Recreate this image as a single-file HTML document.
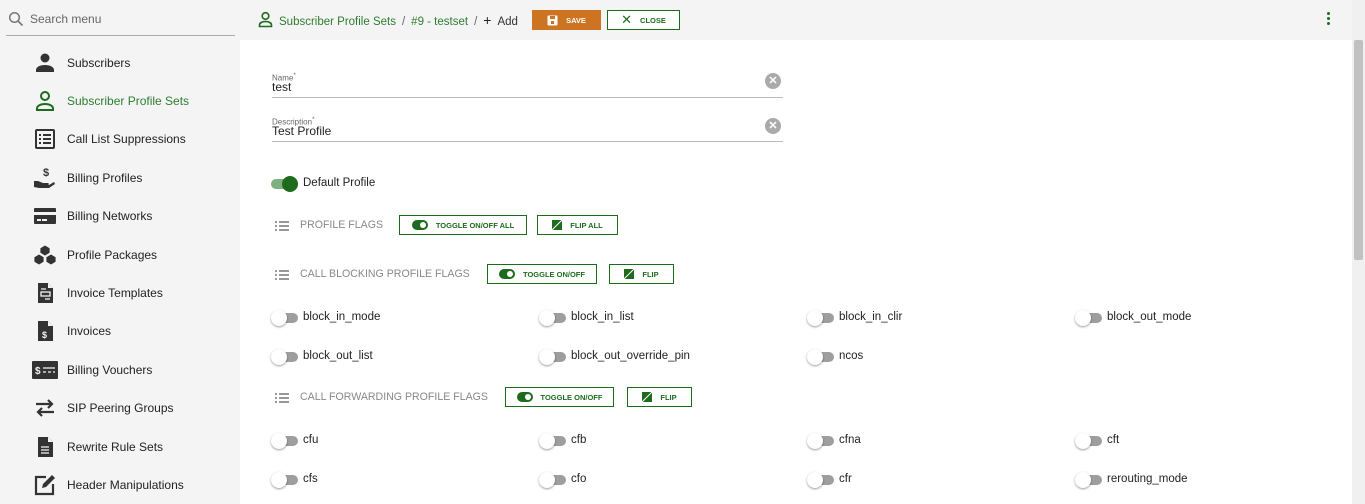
<!DOCTYPE html>
<html><head><meta charset="utf-8"><style>
*{box-sizing:border-box;margin:0;padding:0}
body{width:1365px;height:504px;overflow:hidden;background:#f4f4f4;font-family:"Liberation Sans",Arial,sans-serif;position:relative;color:#222}
.a{position:absolute}
.main{left:240px;top:40px;width:1112px;height:464px;background:#fff}
.sb{left:1352px;top:0;width:13px;height:504px;background:#f0f0f0}
.thumb{left:1354px;top:40px;width:9px;height:220px;background:#c1c1c1;border-radius:2px}
.nav{left:67px;font-size:12px;color:#222;line-height:14px}
.ic{left:33px;width:24px;height:24px}
.btn{border:1px solid #1e6b1e;height:20px;font-size:7.5px;font-weight:bold;color:#1e6b1e;display:flex;align-items:center;justify-content:center;gap:8px;background:#fff}
.sec{font-size:10.6px;color:#888}
.lst{width:14px;height:10px}
.tg{width:28px;height:14px}
.tg .tr{position:absolute;left:3px;top:2px;width:24px;height:10px;border-radius:5px;background:#9e9e9e}
.tg .kn{position:absolute;left:0;top:-1px;width:16px;height:16px;border-radius:50%;background:#fff;box-shadow:0 1px 2px rgba(0,0,0,.4)}
.fl{font-size:11.5px;color:#222}
.sl{color:#666;margin:0 6px}
</style></head><body>
<div class="a main"></div>
<div class="a sb"></div><div class="a thumb"></div>

<svg class="a" style="left:8px;top:11px" width="16" height="16" viewBox="0 0 16 16"><circle cx="6.5" cy="6.5" r="4.8" fill="none" stroke="#777" stroke-width="1.5"/><path d="M10 10l4.5 4.5" stroke="#777" stroke-width="1.6"/></svg>
<div class="a" style="left:30px;top:12px;font-size:12px;color:#666">Search menu</div>
<div class="a" style="left:6px;top:35px;width:229px;height:1px;background:#aaa"></div>

<svg class="a" style="left:258px;top:11px" width="15" height="17" viewBox="0 0 15 17"><circle cx="7.5" cy="5" r="3.3" fill="none" stroke="#1e6b1e" stroke-width="1.6"/><path d="M1.5 15.5v-1.5c0-2 2.5-3.5 6-3.5s6 1.5 6 3.5v1.5z" fill="none" stroke="#1e6b1e" stroke-width="1.6"/></svg>
<div class="a" style="left:279px;top:12px;font-size:11.5px;color:#2e7d32;white-space:nowrap">Subscriber Profile Sets<span class="sl">/</span>#9 - testset<span class="sl">/</span><span style="color:#222;font-size:14px;margin-right:6px">+</span><span style="color:#333">Add</span></div>
<div class="a btn" style="left:532px;top:10px;width:69px;background:#cc7421;border-color:#cc7421;color:#fff"><svg width="11" height="11" viewBox="0 0 11 11"><rect x="0.5" y="0.5" width="10" height="10" rx="1" fill="#fff"/><rect x="3" y="1" width="5" height="3" fill="#cc7421"/><rect x="4" y="6" width="3" height="3" fill="#cc7421"/></svg>SAVE</div>
<div class="a btn" style="left:607px;top:10px;width:73px"><span style="font-size:13px;font-weight:normal">✕</span>CLOSE</div>
<div class="a" style="left:1327px;top:12px;width:3px;height:16px"><div style="width:3px;height:3px;border-radius:50%;background:#1e6b1e;margin-bottom:2px"></div><div style="width:3px;height:3px;border-radius:50%;background:#1e6b1e;margin-bottom:2px"></div><div style="width:3px;height:3px;border-radius:50%;background:#1e6b1e"></div></div>

<svg class="a ic" style="top:51px" viewBox="0 0 24 24"><circle cx="12" cy="7" r="4.5" fill="#333"/><path d="M3 21v-2c0-3 4-5 9-5s9 2 9 5v2z" fill="#333"/></svg>
<div class="a nav" style="top:56px">Subscribers</div>
<svg class="a ic" style="top:89px" viewBox="0 0 24 24"><circle cx="12" cy="7" r="4" fill="none" stroke="#1e6b1e" stroke-width="2"/><path d="M4 21v-1.5c0-2.8 3.6-4.5 8-4.5s8 1.7 8 4.5V21z" fill="none" stroke="#1e6b1e" stroke-width="2"/></svg>
<div class="a nav" style="top:94px;color:#2e7d32">Subscriber Profile Sets</div>
<svg class="a ic" style="top:127px" viewBox="0 0 24 24"><rect x="3" y="3" width="18" height="18" rx="1" fill="none" stroke="#333" stroke-width="2"/><path d="M6 8h2M10 8h8M6 12h2M10 12h8M6 16h2M10 16h8" stroke="#333" stroke-width="2"/></svg>
<div class="a nav" style="top:132px">Call List Suppressions</div>
<svg class="a ic" style="top:166px" viewBox="0 0 24 24"><text x="10" y="10" font-size="11" font-weight="bold" fill="#333" font-family="Liberation Sans">$</text><path d="M1 21v-6h4l5 2h5c1 0 1 2 0 2h-5 6l5-3 1 2-6 4H6z" fill="#333"/></svg>
<div class="a nav" style="top:171px">Billing Profiles</div>
<svg class="a ic" style="top:204px" viewBox="0 0 24 24"><rect x="1" y="4" width="22" height="16" rx="1" fill="#333"/><rect x="1" y="8" width="22" height="3" fill="#f4f4f4"/><rect x="4" y="15" width="4" height="2" fill="#f4f4f4"/><rect x="9" y="15" width="5" height="2" fill="#f4f4f4"/></svg>
<div class="a nav" style="top:209px">Billing Networks</div>
<svg class="a ic" style="top:243px" viewBox="0 0 24 24"><path d="M12 2l5 3v5l-5 3-5-3V5zM6 11l5 3v5l-5 3-5-3v-5zM18 11l5 3v5l-5 3-5-3v-5z" fill="#333" stroke="#f4f4f4" stroke-width="0.8"/></svg>
<div class="a nav" style="top:248px">Profile Packages</div>
<svg class="a ic" style="top:281px" viewBox="0 0 24 24"><path d="M5 2h10l5 5v15H5z" fill="#333"/><path d="M15 2v5h5" fill="#f4f4f4"/><rect x="8" y="11" width="9" height="4" fill="none" stroke="#f4f4f4" stroke-width="1.3"/><path d="M8 8h5M12 18h5" stroke="#f4f4f4" stroke-width="1.3"/></svg>
<div class="a nav" style="top:286px">Invoice Templates</div>
<svg class="a ic" style="top:319px" viewBox="0 0 24 24"><path d="M5 2h10l5 5v15H5z" fill="#333"/><path d="M15 2v5h5" fill="#f4f4f4"/><text x="9" y="19" font-size="9" font-weight="bold" fill="#f4f4f4" font-family="Liberation Sans">$</text></svg>
<div class="a nav" style="top:324px">Invoices</div>
<svg class="a" style="left:32px;top:361px" width="26" height="18" viewBox="0 0 26 18"><rect x="0" y="0" width="26" height="18" rx="1" fill="#333"/><text x="3" y="13" font-size="10" font-weight="bold" fill="#f4f4f4" font-family="Liberation Sans">$</text><path d="M11 7h12M11 11h3M16 11h3M21 11h2" stroke="#f4f4f4" stroke-width="1.3"/></svg>
<div class="a nav" style="top:363px">Billing Vouchers</div>
<svg class="a ic" style="top:396px" viewBox="0 0 24 24"><path d="M3 8h16M15 4l4 4-4 4M21 16H5M9 12l-4 4 4 4" fill="none" stroke="#333" stroke-width="2.2"/></svg>
<div class="a nav" style="top:401px">SIP Peering Groups</div>
<svg class="a ic" style="top:435px" viewBox="0 0 24 24"><path d="M5 2h10l5 5v15H5z" fill="#333"/><path d="M15 2v5h5" fill="#f4f4f4"/><path d="M8 12h8M8 15h8M8 18h8" stroke="#f4f4f4" stroke-width="1.2"/></svg>
<div class="a nav" style="top:440px">Rewrite Rule Sets</div>
<svg class="a ic" style="top:473px" viewBox="0 0 24 24"><path d="M13 4H3v17h17V11" fill="none" stroke="#333" stroke-width="2.2"/><path d="M9 15l1-4 9-9 3 3-9 9z" fill="#333"/></svg>
<div class="a nav" style="top:478px">Header Manipulations</div>

<div class="a" style="left:272px;top:72px;font-size:8px;color:#666">Name<sup>*</sup></div>
<div class="a" style="left:272px;top:80px;font-size:12px">test</div>
<div class="a" style="left:272px;top:97px;width:511px;height:1px;background:#bbb"></div>
<div class="a" style="left:765px;top:73px;width:16px;height:16px;border-radius:50%;background:#aaa;color:#fff;font-size:11px;font-weight:bold;text-align:center;line-height:16px">✕</div>
<div class="a" style="left:272px;top:116px;font-size:8px;color:#666">Description<sup>*</sup></div>
<div class="a" style="left:272px;top:124px;font-size:12px">Test Profile</div>
<div class="a" style="left:272px;top:141px;width:511px;height:1px;background:#bbb"></div>
<div class="a" style="left:765px;top:118px;width:16px;height:16px;border-radius:50%;background:#aaa;color:#fff;font-size:11px;font-weight:bold;text-align:center;line-height:16px">✕</div>

<div class="a tg" style="left:271px;top:177px"><div class="tr" style="background:#7fb07f;left:0"></div><div class="kn" style="left:11px;background:#1e6b1e;box-shadow:none"></div></div>
<div class="a fl" style="left:303px;top:177px">Default Profile</div>

<svg class="a lst" style="left:275px;top:221px" viewBox="0 0 14 10"><path d="M0 1h2M4 1h10M0 5h2M4 5h10M0 9h2M4 9h10" stroke="#777" stroke-width="1.4"/></svg>
<div class="a sec" style="left:300px;top:219px">PROFILE FLAGS</div>
<div class="a btn" style="left:399px;top:215px;width:128px"><svg width="16" height="10"><rect width="16" height="10" rx="5" fill="#1e6b1e"/><circle cx="11" cy="5" r="3" fill="#fff"/></svg>TOGGLE ON/OFF ALL</div>
<div class="a btn" style="left:537px;top:215px;width:81px"><svg width="10" height="10"><rect width="10" height="10" fill="#1e6b1e"/><path d="M10 0L0 10" stroke="#fff"/></svg>FLIP ALL</div>

<svg class="a lst" style="left:275px;top:270px" viewBox="0 0 14 10"><path d="M0 1h2M4 1h10M0 5h2M4 5h10M0 9h2M4 9h10" stroke="#777" stroke-width="1.4"/></svg>
<div class="a sec" style="left:300px;top:268px">CALL BLOCKING PROFILE FLAGS</div>
<div class="a btn" style="left:487px;top:264px;width:110px"><svg width="16" height="10"><rect width="16" height="10" rx="5" fill="#1e6b1e"/><circle cx="11" cy="5" r="3" fill="#fff"/></svg>TOGGLE ON/OFF</div>
<div class="a btn" style="left:609px;top:264px;width:65px"><svg width="10" height="10"><rect width="10" height="10" fill="#1e6b1e"/><path d="M10 0L0 10" stroke="#fff"/></svg>FLIP</div>

<svg class="a lst" style="left:275px;top:393px" viewBox="0 0 14 10"><path d="M0 1h2M4 1h10M0 5h2M4 5h10M0 9h2M4 9h10" stroke="#777" stroke-width="1.4"/></svg>
<div class="a sec" style="left:300px;top:391px">CALL FORWARDING PROFILE FLAGS</div>
<div class="a btn" style="left:505px;top:387px;width:109px"><svg width="16" height="10"><rect width="16" height="10" rx="5" fill="#1e6b1e"/><circle cx="11" cy="5" r="3" fill="#fff"/></svg>TOGGLE ON/OFF</div>
<div class="a btn" style="left:627px;top:387px;width:65px"><svg width="10" height="10"><rect width="10" height="10" fill="#1e6b1e"/><path d="M10 0L0 10" stroke="#fff"/></svg>FLIP</div>

<div class="a tg" style="left:271px;top:311px"><div class="tr"></div><div class="kn"></div></div><div class="a fl" style="left:303px;top:311px">block_in_mode</div>
<div class="a tg" style="left:539px;top:311px"><div class="tr"></div><div class="kn"></div></div><div class="a fl" style="left:571px;top:311px">block_in_list</div>
<div class="a tg" style="left:807px;top:311px"><div class="tr"></div><div class="kn"></div></div><div class="a fl" style="left:839px;top:311px">block_in_clir</div>
<div class="a tg" style="left:1075px;top:311px"><div class="tr"></div><div class="kn"></div></div><div class="a fl" style="left:1107px;top:311px">block_out_mode</div>
<div class="a tg" style="left:271px;top:350px"><div class="tr"></div><div class="kn"></div></div><div class="a fl" style="left:303px;top:350px">block_out_list</div>
<div class="a tg" style="left:539px;top:350px"><div class="tr"></div><div class="kn"></div></div><div class="a fl" style="left:571px;top:350px">block_out_override_pin</div>
<div class="a tg" style="left:807px;top:350px"><div class="tr"></div><div class="kn"></div></div><div class="a fl" style="left:839px;top:350px">ncos</div>

<div class="a tg" style="left:271px;top:434px"><div class="tr"></div><div class="kn"></div></div><div class="a fl" style="left:303px;top:434px">cfu</div>
<div class="a tg" style="left:539px;top:434px"><div class="tr"></div><div class="kn"></div></div><div class="a fl" style="left:571px;top:434px">cfb</div>
<div class="a tg" style="left:807px;top:434px"><div class="tr"></div><div class="kn"></div></div><div class="a fl" style="left:839px;top:434px">cfna</div>
<div class="a tg" style="left:1075px;top:434px"><div class="tr"></div><div class="kn"></div></div><div class="a fl" style="left:1107px;top:434px">cft</div>
<div class="a tg" style="left:271px;top:473px"><div class="tr"></div><div class="kn"></div></div><div class="a fl" style="left:303px;top:473px">cfs</div>
<div class="a tg" style="left:539px;top:473px"><div class="tr"></div><div class="kn"></div></div><div class="a fl" style="left:571px;top:473px">cfo</div>
<div class="a tg" style="left:807px;top:473px"><div class="tr"></div><div class="kn"></div></div><div class="a fl" style="left:839px;top:473px">cfr</div>
<div class="a tg" style="left:1075px;top:473px"><div class="tr"></div><div class="kn"></div></div><div class="a fl" style="left:1107px;top:473px">rerouting_mode</div>
</body></html>
